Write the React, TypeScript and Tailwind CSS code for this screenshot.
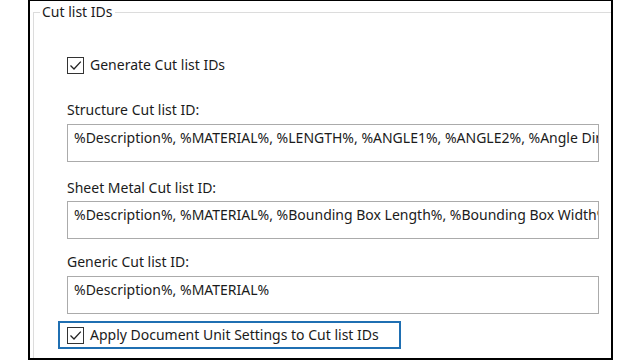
import React from "react";

const font = { fontFamily: '"Noto Sans", "Open Sans", sans-serif' };

function CheckBox() {
  return (
    <span className="w-[17px] h-[17px] shrink-0 border border-[#333333] bg-white flex items-center justify-center">
      <svg width="15" height="15" viewBox="0 0 15 15" fill="none">
        <path d="M2.5 7.5 L6 11 L12.8 3.6" stroke="#222222" strokeWidth="1.3" />
      </svg>
    </span>
  );
}

function IdField({ label, value, labelTop, inputTop }: { label: string; value: string; labelTop: string; inputTop: string }) {
  return (
    <>
      <div className={`${labelTop} h-[20px] leading-[20px]`}>{label}</div>
      <textarea
        readOnly
        wrap="off"
        value={value}
        className={`${inputTop} block w-[532px] h-[38px] border border-[#ababab] bg-white px-[6px] pt-[3px] leading-[20px] text-[14px] text-[#1b1b1b] resize-none overflow-hidden outline-none`}
        style={font}
      />
    </>
  );
}

export default function App() {
  return (
    <div className="w-[640px] h-[360px] bg-white overflow-hidden text-[14px] text-[#1b1b1b]" style={font}>
      <div className="ml-[28px] w-[585px] h-[360px] border-x-2 border-t border-b-2 border-black overflow-hidden">
        <fieldset className="ml-[3px] mt-[1px] w-[640px] border-l border-t border-[#dcdcdc]">
          <legend className="ml-[6px] px-[2px] h-[20px] leading-[20px]">Cut list IDs</legend>

          <div className="pl-[33px] pb-4">
            <label className="mt-[33px] h-[20px] flex items-center gap-[6px]">
              <CheckBox />
              <span className="leading-[20px]">Generate Cut list IDs</span>
            </label>

            <IdField
              label="Structure Cut list ID:"
              value="%Description%, %MATERIAL%, %LENGTH%, %ANGLE1%, %ANGLE2%, %Angle Direction%, %Angle Rotation%"
              labelTop="mt-[25px]"
              inputTop="mt-[4px]"
            />
            <IdField
              label="Sheet Metal Cut list ID:"
              value="%Description%, %MATERIAL%, %Bounding Box Length%, %Bounding Box Width%, %Sheet Metal Thickness%"
              labelTop="mt-[16px]"
              inputTop="mt-[3px]"
            />
            <IdField
              label="Generic Cut list ID:"
              value="%Description%, %MATERIAL%"
              labelTop="mt-[13px]"
              inputTop="mt-[4px]"
            />

            <label className="mt-[7px] -ml-[9px] w-[343px] h-[28px] border-2 border-[#1f6fb2] pl-[7px] flex items-center gap-[6px]">
              <CheckBox />
              <span className="leading-[20px]">Apply Document Unit Settings to Cut list IDs</span>
            </label>
          </div>
        </fieldset>
      </div>
    </div>
  );
}
